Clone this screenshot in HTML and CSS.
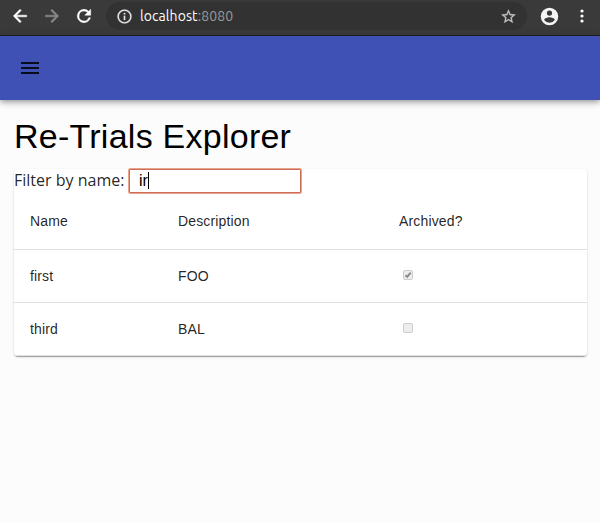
FILE: index.html
```
<!DOCTYPE html>
<html lang="en">
<head>
<meta charset="utf-8">
<title>Re-Trials Explorer</title>
<link rel="stylesheet" href="styles.css">
</head>
<body>
<div class="browser-bar">
  <svg class="icon back" viewBox="0 0 24 24"><path d="M20 11H7.83l5.59-5.59L12 4l-8 8 8 8 1.41-1.41L7.83 13H20z"/></svg>
  <svg class="icon forward" viewBox="0 0 24 24"><path d="M12 4l-1.41 1.41L16.17 11H4v2h12.17l-5.58 5.59L12 20l8-8z"/></svg>
  <svg class="icon reload" viewBox="0 0 24 24"><path d="M17.65 6.35A7.96 7.96 0 0 0 12 4a8 8 0 1 0 7.73 10h-2.08A6 6 0 1 1 12 6c1.66 0 3.14.69 4.22 1.78L13 11h7V4z"/></svg>
  <div class="omnibox">
    <svg class="info" viewBox="0 0 24 24"><path d="M11 7h2v2h-2zm0 4h2v6h-2zm1-9a10 10 0 1 0 0 20 10 10 0 0 0 0-20zm0 18a8 8 0 1 1 0-16 8 8 0 0 1 0 16z"/></svg>
    <span class="url">localhost<span class="port">:8080</span></span>
    <svg class="star" viewBox="0 0 24 24"><path d="M22 9.24l-7.19-.62L12 2 9.19 8.63 2 9.24l5.46 4.73L5.82 21 12 17.27 18.18 21l-1.63-7.03zM12 15.4l-3.76 2.27 1-4.28-3.32-2.88 4.38-.38L12 6.1l1.71 4.04 4.38.38-3.32 2.88 1 4.28z"/></svg>
  </div>
  <svg class="account" viewBox="0 0 24 24"><path d="M12 2a10 10 0 1 0 0 20 10 10 0 0 0 0-20zm0 3a3 3 0 1 1 0 6 3 3 0 0 1 0-6zm0 14.2a7.2 7.2 0 0 1-6-3.22c.03-1.99 4-3.08 6-3.08s5.97 1.09 6 3.08a7.2 7.2 0 0 1-6 3.22z"/></svg>
  <svg class="more" viewBox="0 0 4 14"><circle cx="2" cy="2" r="1.6"/><circle cx="2" cy="7" r="1.6"/><circle cx="2" cy="12" r="1.6"/></svg>
</div>
<header class="app-bar">
  <svg class="menu" viewBox="0 0 24 24"><path d="M3 18h18v-2H3zm0-5h18v-2H3zm0-7v2h18V6z"/></svg>
</header>
<main>
  <h1>Re-Trials Explorer</h1>
  <section class="paper">
    <div class="filter">
      <span class="filter-label">Filter by name:</span>
      <div class="field"><span>ir</span><i class="caret"></i></div>
    </div>
    <table>
      <thead><tr><th class="name">Name</th><th class="description">Description</th><th>Archived?</th></tr></thead>
      <tbody>
        <tr><td>first</td><td>FOO</td><td><span class="checkbox"><svg viewBox="0 0 10 10"><path d="M1.8 5.2L4 7.3L8.4 2"/></svg></span></td></tr>
        <tr><td>third</td><td>BAL</td><td><span class="checkbox"></span></td></tr>
      </tbody>
    </table>
  </section>
</main>
</body>
</html>
```
FILE: styles.css
```
* { box-sizing: border-box; }
body {
  margin: 0;
  min-height: 523px;
  background: #fcfcfc;
  font-family: "Liberation Sans", Arial, sans-serif;
  color: rgba(0, 0, 0, .87);
}
svg { display: block; flex: none; }
.browser-bar {
  display: flex;
  align-items: center;
  height: 36px;
  padding: 0 14px 3px 10px;
  background: #3a3a3a;
  border-bottom: 1px solid #222;
}
.icon { width: 20px; height: 20px; margin-right: 12px; fill: #fff; stroke: #fff; stroke-width: .6; }
.icon.forward { fill: #8b8b8b; stroke: #8b8b8b; }
.omnibox {
  display: flex;
  align-items: center;
  width: 421px;
  height: 28px;
  padding: 0 10px;
  border-radius: 14px;
  background: #323232;
}
.info { width: 17px; height: 17px; margin-right: 7px; fill: #e4e4e4; stroke: #e4e4e4; stroke-width: .3; }
.url {
  font: 14px/20px Ubuntu, "Noto Sans", sans-serif;
  letter-spacing: .08px;
  color: #fff;
}
.port { color: #9a9a9a; }
.star { width: 17px; height: 17px; margin-left: auto; fill: #c4c4c4; stroke: #c4c4c4; stroke-width: .3; }
.account { width: 21px; height: 21px; margin-left: 12px; fill: #f5f5f5; }
.more { width: 4px; height: 14px; margin-left: auto; margin-right: 2px; fill: #fff; }
.app-bar {
  display: flex;
  align-items: center;
  height: 64px;
  padding-left: 18px;
  background: #3f51b5;
  box-shadow: 0 2px 4px -1px rgba(0,0,0,.2), 0 4px 5px rgba(0,0,0,.14), 0 1px 10px rgba(0,0,0,.12);
}
.menu { width: 24px; height: 24px; fill: #090c1b; }
main { padding: 16px 13px 0 14px; }
h1 {
  margin: 0 0 12px;
  font-size: 34px;
  line-height: 41px;
  font-weight: 400;
  letter-spacing: .25px;
  color: #000;
}
.paper {
  height: 187px;
  border-radius: 4px;
  background: #fff;
  box-shadow: 0 2px 1px -1px rgba(0,0,0,.2), 0 1px 1px rgba(0,0,0,.14), 0 1px 3px rgba(0,0,0,.12);
}
.filter { display: flex; height: 24px; }
.filter-label {
  width: 114px;
  font: 16px/22px "Open Sans", sans-serif;
  white-space: nowrap;
}
.field {
  display: flex;
  align-items: center;
  width: 174px;
  height: 26px;
  margin-top: -1px;
  padding: 0 0 1px 10px;
  border: 1px solid #eaa28d;
  border-radius: 2px;
  box-shadow: inset 0 0 0 1px #cb6e55;
  background: #fff;
  font-size: 16px;
  color: #000;
}
.caret { width: 1px; height: 17px; background: #000; }
table {
  width: 100%;
  table-layout: fixed;
  border-collapse: separate;
  border-spacing: 0;
  font-size: 14px;
  letter-spacing: .15px;
}
th, td {
  height: 53px;
  padding: 0 16px;
  border-bottom: 1px solid #e0e0e0;
  font-weight: 400;
  text-align: left;
  vertical-align: middle;
}
th { height: 57px; }
.name { width: 148px; }
.description { width: 221px; }
.checkbox {
  display: block;
  width: 10px;
  height: 10px;
  margin: 0 0 2px 4px;
  border: 1px solid #ccc;
  border-radius: 2px;
  background: #eee;
}
.checkbox svg { width: 8px; height: 8px; fill: none; stroke: #8c8c8c; stroke-width: 2.6; }
```
